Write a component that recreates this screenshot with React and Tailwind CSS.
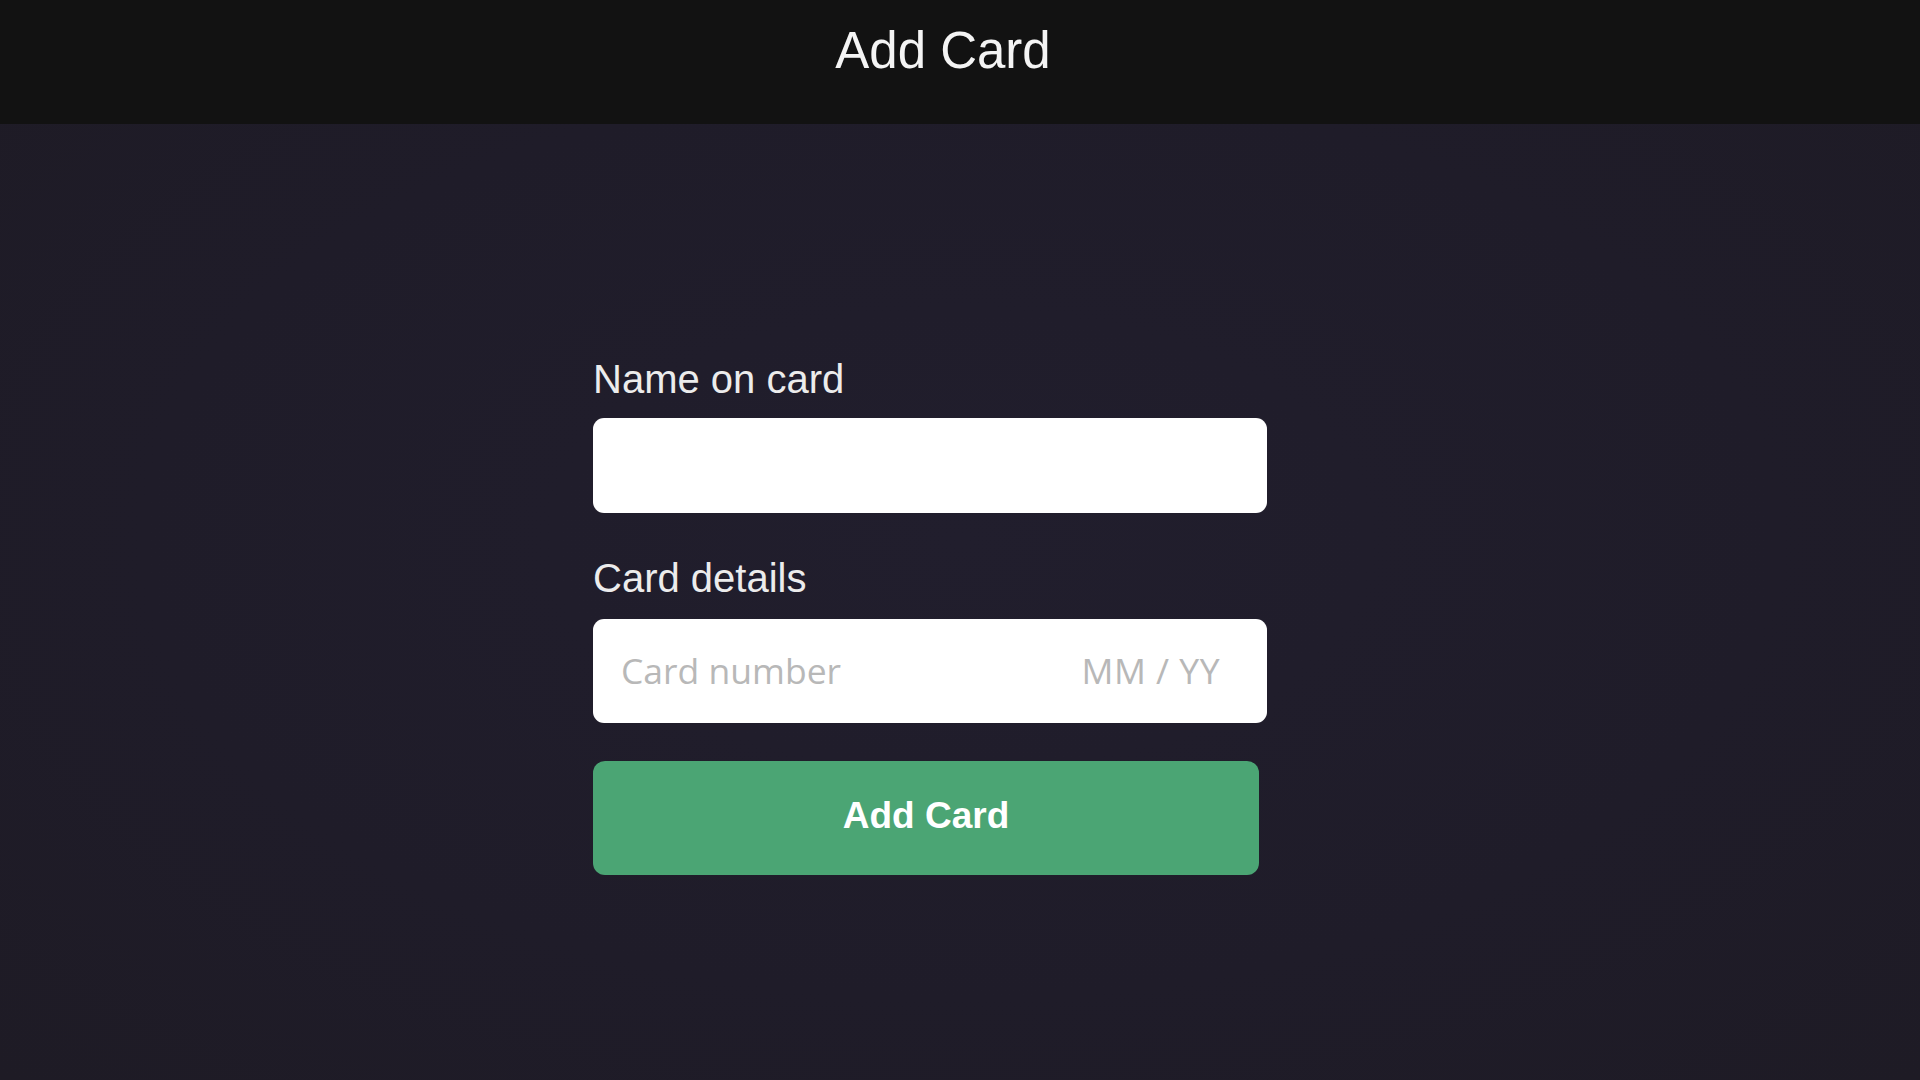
export default function App() {
  return (
    <div className="min-h-screen w-full bg-[#201d2a] bg-[radial-gradient(ellipse_at_center,#211e2d_0%,#1f1c29_60%,#1e1b25_100%)] font-['Liberation_Sans',Arial,sans-serif]">
      {/* Header */}
      <div className="h-[124px] bg-[#121212] pt-[22px] pr-[34px] text-center">
        <h1 className="text-[51px] leading-[58px] text-[#f4f4f4]">Add Card</h1>
      </div>

      {/* Form */}
      <div className="pl-[593px] pt-[232px]">
        <form className="w-[674px]" onSubmit={e => e.preventDefault()}>
          <label className="block text-[40px] leading-[46px] text-[#ececec]">Name on card</label>
          <input
            type="text"
            className="mt-[16px] block h-[95px] w-full rounded-[11px] bg-white px-[29px] text-[35px] text-gray-800 outline-none"
          />

          <label className="mt-[42px] block text-[40px] leading-[46px] text-[#ececec]">Card details</label>
          <div className="mt-[18px] flex h-[104px] w-full items-center rounded-[11px] bg-white pl-[28px] pr-[47px] font-['Open_Sans',sans-serif] text-[35.5px] text-[#b8b8b8]">
            <span className="flex-1">Card number</span>
            <span className="tracking-[0.5px]">MM / YY</span>
          </div>

          <button
            type="submit"
            className="mt-[38px] flex h-[114px] w-[666px] items-center justify-center rounded-[12px] bg-[#4ba574] pb-[5px] text-[37px] font-bold text-white"
          >
            Add Card
          </button>
        </form>
      </div>
    </div>
  )
}
